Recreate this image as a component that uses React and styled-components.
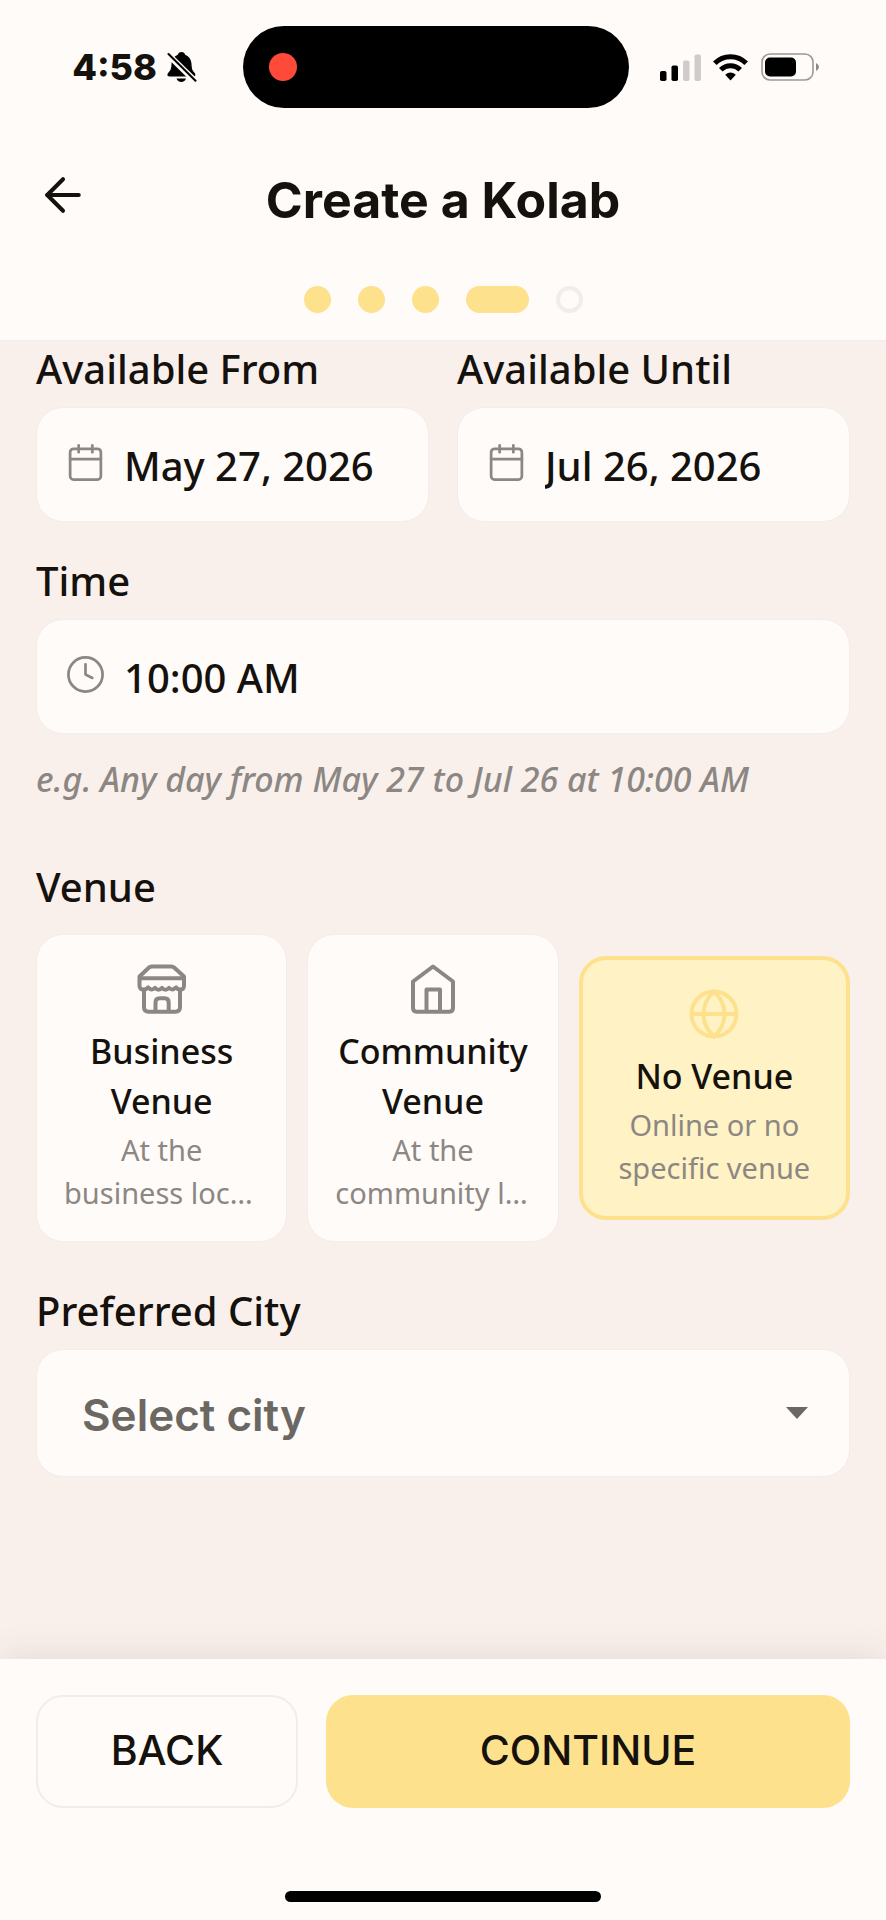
import React, { useState } from 'react'
import styled, { ThemeProvider, createGlobalStyle } from 'styled-components'
import { ArrowLeft, Calendar, Clock } from 'lucide-react'

const theme = {
  surface: '#fffbf8',
  canvas: '#f9f0ec',
  ink: '#15110d',
  gray: '#8c8783',
  grayDark: '#6b6763',
  line: '#f1edea',
  primary: '#fee18d',
  primaryLight: '#fff2c4',
  heading: "'Inter', 'Liberation Sans', sans-serif",
  body: "'Noto Sans', 'Open Sans', sans-serif"
}

const GlobalStyle = createGlobalStyle`
  *, *::before, *::after {
    box-sizing: border-box;
  }

  body {
    margin: 0;
    background: ${(p) => p.theme.surface};
    color: ${(p) => p.theme.ink};
    font-family: ${(p) => p.theme.body};
  }

  button, input, select {
    font: inherit;
    color: inherit;
  }
`

const Screen = styled.div`
  display: flex;
  flex-direction: column;
  min-height: 100vh;
`

const Header = styled.header`
  padding-top: 26px;
  padding-bottom: 27px;
  background: ${(p) => p.theme.surface};
  border-bottom: 1px solid ${(p) => p.theme.line};
`

const StatusBar = styled.div`
  display: grid;
  grid-template-columns: 1fr 386px 1fr;
  align-items: center;
  padding-right: 14px;
`

const StatusLeft = styled.div`
  display: flex;
  align-items: center;
  justify-content: flex-end;
  gap: 10px;
  padding-right: 46px;
`

const StatusRight = styled.div`
  display: flex;
  align-items: center;
  gap: 12px;
  padding-left: 31px;
`

const StatusTime = styled.time`
  font-family: ${(p) => p.theme.heading};
  font-size: 36px;
  line-height: 44px;
  font-weight: 800;
`

const Island = styled.div`
  display: flex;
  align-items: center;
  height: 82px;
  padding-left: 26px;
  border-radius: 41px;
  background: #000;
`

const RecordingDot = styled.span`
  width: 28px;
  height: 28px;
  border-radius: 50%;
  background: #ff4a3a;
`

const TitleRow = styled.div`
  display: grid;
  grid-template-columns: 1fr auto 1fr;
  align-items: start;
  margin-top: 60px;
  padding: 0 36px;
`

const IconButton = styled.button`
  display: flex;
  width: 54px;
  height: 54px;
  padding: 0;
  border: 0;
  background: none;
`

const Title = styled.h1`
  margin: 0;
  font-family: ${(p) => p.theme.heading};
  font-size: 50px;
  line-height: 64px;
  font-weight: 700;
`

const Steps = styled.ol`
  display: flex;
  justify-content: center;
  gap: 27px;
  margin: 54px 0 0;
  padding: 0;
  list-style: none;
`

const Step = styled.li`
  width: ${(p) => (p.$state === 'current' ? 63 : 27)}px;
  height: 27px;
  border-radius: 14px;
  border: ${(p) => (p.$state === 'todo' ? `4px solid ${p.theme.line}` : '0')};
  background: ${(p) => (p.$state === 'todo' ? 'none' : p.theme.primary)};
`

const Form = styled.form`
  flex: 1;
  padding: 3px 36px 36px;
  background: ${(p) => p.theme.canvas};
`

const DateRow = styled.div`
  display: grid;
  grid-template-columns: repeat(2, minmax(0, 1fr));
  gap: 28px;
  margin-bottom: 34px;
`

const Label = styled.label`
  display: block;
  margin-bottom: 14px;
  font-size: 40px;
  line-height: 49px;
  font-weight: 500;
`

const Field = styled.div`
  display: flex;
  align-items: center;
  gap: 18px;
  height: 115px;
  padding: 0 28px;
  border: 1px solid ${(p) => p.theme.line};
  border-radius: 27px;
  background: ${(p) => p.theme.surface};
  color: ${(p) => p.theme.gray};

  svg {
    flex: none;
    margin-bottom: 4px;
  }
`

const Input = styled.input`
  flex: 1;
  min-width: 0;
  padding: 2px 0 0;
  border: 0;
  outline: 0;
  background: none;
  color: ${(p) => p.theme.ink};
  font-size: 40px;
  line-height: 52px;
  font-weight: 500;
`

const Hint = styled.p`
  margin: 23px 0 61px;
  color: ${(p) => p.theme.gray};
  font-size: 34px;
  line-height: 44px;
  font-style: italic;
  font-weight: 500;
`

const Venues = styled.fieldset`
  min-width: 0;
  margin: 0 0 44px;
  padding: 0;
  border: 0;
`

const Legend = styled.legend`
  margin-bottom: 23px;
  padding: 0;
  font-size: 40px;
  line-height: 49px;
  font-weight: 500;
`

const VenueRow = styled.div`
  display: grid;
  grid-template-columns: repeat(3, minmax(0, 1fr));
  align-items: center;
`

const VenueCell = styled.div`
  position: relative;
  padding-right: 20px;

  &:last-child {
    padding-right: 0;
  }
`

const Radio = styled.input`
  position: absolute;
  opacity: 0;
`

const VenueCard = styled.label`
  display: flex;
  flex-direction: column;
  align-items: center;
  padding: 27px;
  border: ${(p) => (p.$selected ? 4 : 1)}px solid
    ${(p) => (p.$selected ? p.theme.primary : p.theme.line)};
  border-radius: 27px;
  background: ${(p) =>
    p.$selected ? p.theme.primaryLight : p.theme.surface};
  text-align: center;

  svg {
    color: ${(p) => (p.$selected ? p.theme.primary : p.theme.gray)};
  }
`

const VenueName = styled.span`
  margin: 10px 0 2px;
  font-size: 34px;
  line-height: 50px;
  font-weight: 500;
`

const VenueText = styled.span`
  display: block;
  max-width: 100%;
  max-height: 86px;
  overflow: hidden;
  color: ${(p) => p.theme.gray};
  font-size: 29px;
  line-height: 43px;
  text-overflow: ellipsis;
`

const SelectBox = styled.div`
  display: grid;
  align-items: center;

  & > * {
    grid-area: 1 / 1;
  }

  svg {
    justify-self: end;
    margin-right: 42px;
    pointer-events: none;
  }
`

const Select = styled.select`
  width: 100%;
  height: 128px;
  padding: 4px 45px 0;
  appearance: none;
  border: 1px solid ${(p) => p.theme.line};
  border-radius: 27px;
  background: ${(p) => p.theme.surface};
  color: ${(p) => p.theme.grayDark};
  font-family: ${(p) => p.theme.heading};
  font-size: 44px;
  font-weight: 600;
`

const Footer = styled.footer`
  padding: 36px 36px 18px;
  background: ${(p) => p.theme.surface};
  box-shadow: 0 -4px 32px rgba(60, 40, 40, 0.1);
`

const Actions = styled.div`
  display: grid;
  grid-template-columns: 1fr 2fr;
  gap: 28px;
`

const Button = styled.button`
  height: 113px;
  padding: 0 0 4px;
  border: ${(p) => (p.$primary ? '0' : `2px solid ${p.theme.line}`)};
  border-radius: 27px;
  background: ${(p) => (p.$primary ? p.theme.primary : 'none')};
  font-family: ${(p) => p.theme.heading};
  font-size: 41px;
  font-weight: 500;
`

const HomeBar = styled.div`
  width: 316px;
  height: 11px;
  margin: 83px auto 0;
  border-radius: 6px;
  background: #000;
`

const BellOff = () => (
  <svg width="30" height="30" viewBox="0 0 30 30" aria-hidden="true">
    <path
      d="M14.5 0c2 0 3.300 1.200 3.700 2.700C22 4.300 24.300 7.500 24.500 12c.2 4.500.8 6.500 2.600 8.200 2 1.900 1.600 4.300-.9 4.300H2.500C0 24.500-.3 22.100 1.700 20.200 3.700 18.300 4.300 16.500 4.500 12c.2-4.500 2.500-7.700 6.300-9.300C11.200 1.200 12.500 0 14.500 0Z"
      fill="#000"
    />
    <path d="M9.500 26.500h9.500c-.6 2.200-2.500 3.500-4.700 3.500s-4.200-1.300-4.800-3.500Z" fill="#000" />
    <path d="M0 1.500 29 30" stroke="#fffbf8" strokeWidth="6" />
    <path
      d="M1.500 2 28.500 28.800"
      stroke="#000"
      strokeWidth="2"
      strokeLinecap="round"
    />
  </svg>
)

const Signal = () => (
  <svg width="41" height="27" viewBox="0 0 41 27" aria-hidden="true">
    <rect x="0" y="17" width="6.500" height="10" rx="1.800" fill="#000" />
    <rect x="11.500" y="11.500" width="6.500" height="15.500" rx="1.800" fill="#000" />
    <rect x="23" y="6.500" width="6.500" height="20.500" rx="1.800" fill="#cfcccb" />
    <rect x="34.500" y="0.500" width="6.500" height="26.500" rx="1.800" fill="#cfcccb" />
  </svg>
)

const Wifi = () => (
  <svg width="35" height="27" viewBox="0 0 35 27" fill="none" aria-hidden="true">
    <path d="M1.800 9.300a22 22 0 0 1 31.400 0" stroke="#000" strokeWidth="5" />
    <path d="M7.800 15.800a13.500 13.500 0 0 1 19.400 0" stroke="#000" strokeWidth="5" />
    <path d="M12.200 20.800q5.300-4.600 10.600 0l-5.300 5.700Z" fill="#000" />
  </svg>
)

const Battery = () => (
  <svg width="59" height="28" viewBox="0 0 59 28" fill="none" aria-hidden="true">
    <rect x="2" y="1" width="51" height="26" rx="8" stroke="#9b9897" strokeWidth="1.600" />
    <rect x="5" y="4.500" width="31" height="19" rx="5" fill="#000" />
    <path d="M56 10q3 1.500 3 4t-3 4Z" fill="#8c8988" />
  </svg>
)

const StoreIcon = () => (
  <svg
    width="54"
    height="54"
    viewBox="4 3 54 54"
    fill="none"
    stroke="currentColor"
    strokeWidth="4"
    strokeLinecap="round"
    strokeLinejoin="round"
    aria-hidden="true"
  >
    <path d="M20.500 7.500h20q1.500 0 2.600 1L53 17.500v9q0 4.500-4 4-2.500 0-4-2.200-3.500 4-7 .6-3.500 3.600-7 0-3.500 3.600-7 0-3.500 3.400-7-.6-1.500 2.200-4 2.200-4.500.5-4.500-4v-9l9.500-9q1-1 2.500-1Z" />
    <path d="M9 19.300h44M13 30.500V48q0 4.700 4.700 4.700h26.600q4.700 0 4.700-4.700V30.500" />
    <path d="M24.500 52V43.500q0-4.200 4.200-4.200h4.800q4.200 0 4.200 4.200V52" />
  </svg>
)

const HomeIcon = () => (
  <svg
    width="54"
    height="54"
    viewBox="3 3 54 54"
    fill="none"
    stroke="currentColor"
    strokeWidth="4"
    strokeLinecap="round"
    strokeLinejoin="round"
    aria-hidden="true"
  >
    <path d="M30 7.500 10 22.500V49q0 3.700 3.700 3.700h32.600q3.700 0 3.700-3.700V22.500Z" />
    <path d="M23.500 52V30.500h13.500V52" />
  </svg>
)

const GlobeIcon = () => (
  <svg
    width="54"
    height="54"
    viewBox="0 0 54 54"
    fill="none"
    stroke="currentColor"
    strokeWidth="4"
    aria-hidden="true"
  >
    <circle cx="27" cy="27" r="22.500" />
    <path d="M4.500 27h45M27 4.500q-10.500 9.500-10.500 22.500t10.500 22.500q10.500-9.500 10.500-22.500T27 4.500Z" />
  </svg>
)

const steps = ['done', 'done', 'done', 'current', 'todo']

// the no-break spaces keep the second line whole, so it ends in an ellipsis
const venues = [
  {
    id: 'business',
    name: 'Business Venue',
    text: 'At the business\u00a0location',
    Icon: StoreIcon
  },
  {
    id: 'community',
    name: 'Community Venue',
    text: 'At the community\u00a0location',
    Icon: HomeIcon
  },
  {
    id: 'none',
    name: 'No Venue',
    text: 'Online or no specific venue',
    Icon: GlobeIcon
  }
]

const TextField = ({ id, label, value, Icon }) => (
  <div>
    <Label htmlFor={id}>{label}</Label>
    <Field>
      <Icon size={41} strokeWidth={1.6} />
      <Input id={id} type="text" defaultValue={value} readOnly />
    </Field>
  </div>
)

export default function App() {
  const [venue, setVenue] = useState('none')

  return (
    <ThemeProvider theme={theme}>
      <GlobalStyle />
      <Screen>
        <Header>
          <StatusBar>
            <StatusLeft>
              <StatusTime>4:58</StatusTime>
              <BellOff />
            </StatusLeft>
            <Island>
              <RecordingDot />
            </Island>
            <StatusRight>
              <Signal />
              <Wifi />
              <Battery />
            </StatusRight>
          </StatusBar>
          <TitleRow>
            <IconButton type="button" aria-label="Go back">
              <ArrowLeft size={54} strokeWidth={1.8} />
            </IconButton>
            <Title>Create a Kolab</Title>
          </TitleRow>
          <Steps>
            {steps.map((state, i) => (
              <Step key={i} $state={state} />
            ))}
          </Steps>
        </Header>

        <Form id="kolab" onSubmit={(e) => e.preventDefault()}>
          <DateRow>
            <TextField
              id="from"
              label="Available From"
              value="May 27, 2026"
              Icon={Calendar}
            />
            <TextField
              id="until"
              label="Available Until"
              value="Jul 26, 2026"
              Icon={Calendar}
            />
          </DateRow>
          <TextField id="time" label="Time" value="10:00 AM" Icon={Clock} />
          <Hint>e.g. Any day from May 27 to Jul 26 at 10:00 AM</Hint>

          <Venues>
            <Legend>Venue</Legend>
            <VenueRow>
              {venues.map(({ id, name, text, Icon }) => (
                <VenueCell key={id}>
                  <Radio
                    id={id}
                    type="radio"
                    name="venue"
                    checked={venue === id}
                    onChange={() => setVenue(id)}
                  />
                  <VenueCard htmlFor={id} $selected={venue === id}>
                    <Icon />
                    <VenueName>{name}</VenueName>
                    <VenueText>{text}</VenueText>
                  </VenueCard>
                </VenueCell>
              ))}
            </VenueRow>
          </Venues>

          <Label htmlFor="city">Preferred City</Label>
          <SelectBox>
            <Select id="city" defaultValue="">
              <option value="">Select city</option>
            </Select>
            <svg width="22" height="12" viewBox="0 0 22 12" aria-hidden="true">
              <path d="M0 0h22L11 12Z" fill="#6b6763" />
            </svg>
          </SelectBox>
        </Form>

        <Footer>
          <Actions>
            <Button type="button">BACK</Button>
            <Button type="submit" form="kolab" $primary>
              CONTINUE
            </Button>
          </Actions>
          <HomeBar />
        </Footer>
      </Screen>
    </ThemeProvider>
  )
}
